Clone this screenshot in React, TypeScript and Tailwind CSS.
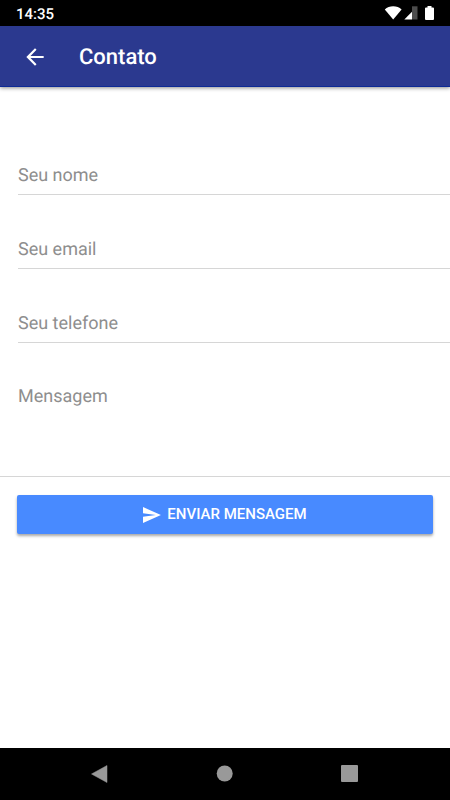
import { useState } from 'react'

type FieldProps = {
  id: string
  label: string
  type: string
}

const fields: FieldProps[] = [
  { id: 'name', label: 'Seu nome', type: 'text' },
  { id: 'email', label: 'Seu email', type: 'email' },
  { id: 'phone', label: 'Seu telefone', type: 'tel' },
]

const StatusBar = () => (
  <div className="flex h-[26px] items-center justify-between bg-black px-4 text-white">
    <span className="text-[15px] font-medium leading-5 pt-0.5">14:35</span>
    <div className="flex items-center">
      <svg width="18" height="14" viewBox="0 0 18 14" fill="currentColor">
        <path d="M0.8 3.4C3 1.3 6 0.3 9.200 0.3s6.200 1 8.400 3.100L9.200 13.600z" />
      </svg>
      <svg className="ml-0.5" width="14" height="14" viewBox="0 0 14 14">
        <path d="M8 5.800V13.500H0.300z" fill="#fff" />
        <path d="M8 0.300H13.500V13.500H8z" fill="#4d4d4d" />
      </svg>
      <svg className="ml-[7px]" width="9" height="14" viewBox="0 0 9 14" fill="currentColor">
        <path d="M2.500 0h4v1.500H8a1 1 0 0 1 1 1V13a1 1 0 0 1-1 1H1a1 1 0 0 1-1-1V2.500a1 1 0 0 1 1-1h1.500z" />
      </svg>
    </div>
  </div>
)

const Header = () => (
  <header className="flex h-[61px] items-center gap-[31px] border-b border-[#0d2a96] bg-[#2b398f] pl-[22px] pt-0.5 text-white shadow-[0_1px_4px_rgba(0,0,0,0.45)]">
    <button type="button" aria-label="Voltar">
      <svg className="block" width="26" height="26" viewBox="0 0 24 24" fill="currentColor">
        <path d="M20 11H7.830l5.590-5.590L12 4l-8 8 8 8 1.410-1.410L7.830 13H20v-2z" />
      </svg>
    </button>
    <h1 className="pt-0.5 text-[22px] font-medium leading-7">Contato</h1>
  </header>
)

const Field = ({ id, label, type }: FieldProps) => {
  const [value, setValue] = useState('')

  return (
    <div className="ml-[18px] grid h-[74px] items-end border-b border-[#d6d6d6] pb-1.5">
      <label htmlFor={id} className={value ? 'invisible col-start-1 row-start-1' : 'pointer-events-none z-10 col-start-1 row-start-1 leading-6'}>{label}</label>
      <input id={id} type={type} value={value} onChange={(e) => setValue(e.target.value)} className="col-start-1 row-start-1 h-6 w-full text-black outline-none" />
    </div>
  )
}

const Message = () => {
  const [value, setValue] = useState('')

  return (
    <div className="grid items-start border-b border-[#d6d6d6] pb-[7px] pl-[18px] pt-[42px]">
      <label htmlFor="message" className={value ? 'invisible col-start-1 row-start-1' : 'pointer-events-none z-10 col-start-1 row-start-1 leading-6'}>Mensagem</label>
      <textarea id="message" value={value} onChange={(e) => setValue(e.target.value)} className="col-start-1 row-start-1 block h-[84px] w-full resize-none leading-6 text-black outline-none" />
    </div>
  )
}

const NavBar = () => (
  <nav className="grid h-[52px] grid-cols-3 place-items-center bg-black px-[37px] text-[#999]">
    <button type="button" aria-label="Voltar">
      <svg className="block" width="18" height="18" viewBox="0 0 18 18" fill="currentColor">
        <path d="M16 0.500V17.500L0.500 9z" stroke="currentColor" strokeWidth="0.500" strokeLinejoin="round" />
      </svg>
    </button>
    <button type="button" aria-label="Início">
      <svg className="block" width="18" height="18" viewBox="0 0 18 18" fill="currentColor">
        <circle cx="8.700" cy="8.500" r="8" />
      </svg>
    </button>
    <button type="button" aria-label="Recentes">
      <svg className="block" width="18" height="18" viewBox="0 0 18 18" fill="currentColor">
        <rect x="0" y="0" width="17" height="17" rx="1" />
      </svg>
    </button>
  </nav>
)

const App = () => (
  <div className="flex min-h-screen flex-col bg-white font-[Roboto,sans-serif] [text-rendering:geometricPrecision]">
    <StatusBar />
    <Header />
    <main className="flex-1 pt-[34px]">
      <form onSubmit={(e) => e.preventDefault()} className="text-lg text-[#8e8e8e]">
        {fields.map((v) => <Field key={v.id} {...v} />)}
        <Message />
        <div className="px-[17px] pt-[18px]">
          <button type="submit" className="flex h-[39px] w-full items-center justify-center gap-1 rounded-xs bg-[#488aff] text-[15px] font-medium uppercase text-white shadow-[0_2px_3px_rgba(0,0,0,0.35)]">
            <svg width="20" height="20" viewBox="0 0 24 24" fill="currentColor">
              <path d="M0 21.500L21.500 12 0 2.500v7.400L15.500 12 0 14.100z" />
            </svg>
            Enviar mensagem
          </button>
        </div>
      </form>
    </main>
    <NavBar />
  </div>
)

export default App
